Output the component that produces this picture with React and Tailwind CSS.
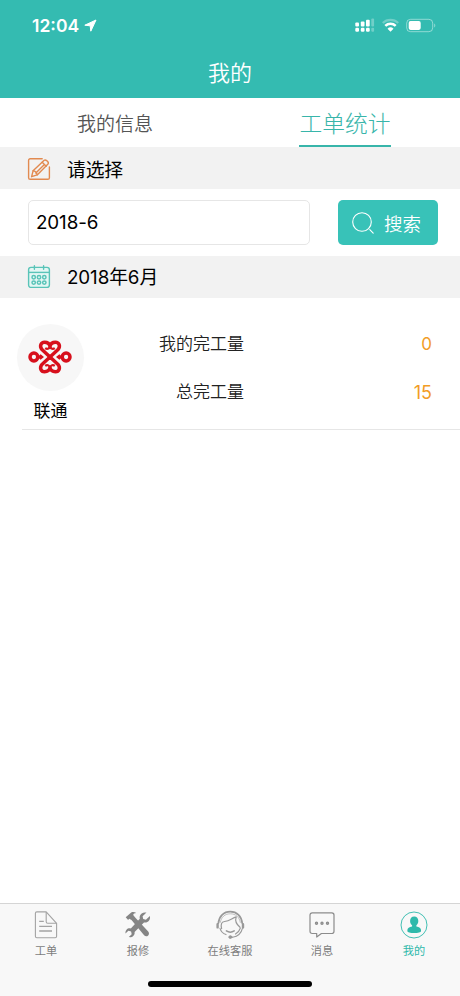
const StatusIcons = () => (
  <svg className="h-4 w-[82px]" viewBox="0 0 82 16" fill="#fff">
    {/* dual sim signal */}
    <g>
      <rect x="1.3" y="4.4" width="3.7" height="4.2" rx="1" />
      <rect x="6.8" y="3.4" width="3.7" height="5.2" rx="1" />
      <rect x="12" y="1.8" width="3.7" height="6.8" rx="1" />
      <rect x="17.3" y="0.6" width="2.8" height="8" rx="1" opacity="0.3" />
      <rect x="1.3" y="9.8" width="3.7" height="4" rx="1.2" />
      <rect x="6.8" y="9.8" width="3.7" height="4" rx="1.2" />
      <rect x="12" y="9.8" width="3.7" height="4" rx="1.2" />
      <rect x="17.3" y="9.8" width="2.8" height="4" rx="1" opacity="0.3" />
    </g>
    {/* wifi */}
    <g fill="none" stroke="#fff">
      <path d="M28.8 5a11 11 0 0 1 15.4 0" strokeWidth="2.2" opacity="0.3" />
      <path d="M31.3 7.8a7.4 7.4 0 0 1 10.4 0" strokeWidth="2.5" />
    </g>
    <path d="M33.5 10.7a4.4 4.4 0 0 1 6 0L36.5 13.8z" />
    {/* battery */}
    <rect x="52.7" y="1.3" width="26" height="12.4" rx="3.8" fill="none" stroke="#fff" opacity="0.45" />
    <rect x="54.7" y="3.1" width="12" height="8.8" rx="1.8" />
    <path d="M80.2 5.4c1.5.6 1.5 3.4 0 4z" opacity="0.45" />
  </svg>
);

const EditIcon = () => (
  <svg className="size-6" viewBox="0 0 24 24" fill="none" stroke="#e28a50" strokeWidth="1.4" strokeLinecap="round" strokeLinejoin="round">
    <path d="M15.2 1.7H3.2a1.6 1.6 0 0 0-1.6 1.6v17.4a1.6 1.6 0 0 0 1.6 1.6h17.6a1.6 1.6 0 0 0 1.6-1.6V10" />
    <path d="M4.6 19.7l1.5-5.9L17.2 3.3c1.4-1.3 5.2 2.2 3.8 3.8L10.2 17.9z" />
    <path d="M15.2 5.2l4 4M17.2 7.8l-8.4 8.1M6.1 13.8c1.7.2 3.6 1.9 4.1 4.1" />
  </svg>
);

const CalendarIcon = () => (
  <svg className="size-6" viewBox="0 0 24 24" fill="none" stroke="#59c4b8" strokeWidth="1.4">
    <rect x="1.6" y="2.4" width="20.8" height="20" rx="2.4" fill="#e4f7f4" />
    <path d="M1.6 7.4h20.8" />
    <path d="M7.4.8v3.4M16.6.8v3.4" strokeLinecap="round" />
    <g strokeWidth="1.5">
      <circle cx="6.7" cy="12.2" r="1.7" />
      <circle cx="12" cy="12.2" r="1.7" />
      <circle cx="17.3" cy="12.2" r="1.7" />
      <circle cx="6.7" cy="17.6" r="1.7" />
      <circle cx="12" cy="17.6" r="1.7" />
      <circle cx="17.3" cy="17.6" r="1.7" />
    </g>
  </svg>
);

const UnicomLogo = () => (
  <svg className="h-[34px] w-11" viewBox="0 0 44 34" fill="none" stroke="#d7101c" strokeWidth="3.5" strokeLinejoin="round">
    <circle cx="5.9" cy="17" r="3.9" />
    <circle cx="38.1" cy="17" r="3.9" />
    {/* top and bottom hearts, crossing in the middle */}
    <path d="M22 17L14.2 9.8C11 6.2 13 2.3 16.6 2.3c3 0 4.8 1.6 5.4 4 .6-2.4 2.4-4 5.4-4 3.6 0 5.6 3.9 2.4 7.5L22 17" />
    <path d="M22 17l-7.8 7.2c-3.2 3.6-1.2 7.5 2.4 7.5 3 0 4.8-1.6 5.4-4 .6 2.4 2.4 4 5.4 4 3.6 0 5.6-3.9 2.4-7.5L22 17" />
    <path d="M17.2 8.2c1.8 1.2 3.9.7 4.8-1.4.9 2.1 3 2.6 4.8 1.4M17.2 25.8c1.8-1.2 3.9-.7 4.8 1.4.9-2.1 3-2.6 4.8-1.4" strokeWidth="2.2" />
    {/* side knots */}
    <path d="M9.6 17l3-2.8 3.4 2.8-3.4 2.8zM34.4 17l-3-2.8-3.4 2.8 3.4 2.8z" fill="#d7101c" stroke="none" />
  </svg>
);

const OrderIcon = () => (
  <svg className="size-7" viewBox="0 0 28 28" fill="none" stroke="#a3a3a3" strokeWidth="1.1" strokeLinejoin="round">
    <path d="M14.2.9H4.8c-.9 0-1.4.5-1.4 1.4v23c0 .9.5 1.4 1.4 1.4h18.4c.9 0 1.4-.5 1.4-1.4v-13z" />
    <path d="M14.2.9v9.9c0 1 .5 1.5 1.5 1.5h8.9" />
    <path d="M7.2 10.4h4.6M7.2 15.3h12.8M7.2 20h12.8" strokeWidth="1.3" />
  </svg>
);

const RepairIcon = () => (
  <svg className="size-7" viewBox="0 0 28 28" fill="#858585">
    {/* wrench */}
    <path d="M25.9 5.1l-4 3.7-2.7-.8-.6-2.8 3.9-3.6c-3-.8-6 .8-6.7 3.5-.3 1-.2 1.8 0 2.6L6.8 17.4c-3-.7-5.6 1.4-5.3 5l2.9-2.6 2.7.8.6 2.7-2.9 2.8c3.3.6 6.3-1.6 5.8-5.2l9.4-9.4c3.6.7 6.7-2 5.9-6.4z" />
    {/* hammer */}
    <path d="M1.7 6.2L7.2 1.4c1.8-.8 3.6-.5 5 .7-1.8.1-2.7.6-3 1.8l2 2.7L24.2 20.5c1.4 1.6.8 3.3-.3 4.2-1.1.9-2.7.8-3.8-.5L7.5 9.1 5.2 7.7 4.1 9z" />
  </svg>
);

const ServiceIcon = () => (
  <svg className="h-[30px] w-[30px]" viewBox="0 0 30 30" fill="none" stroke="#999" strokeLinecap="round" strokeLinejoin="round">
    <path d="M3.4 13.2C4 6.3 8.7 1.6 15.3 1.6s11.3 4.7 11.9 11.6" strokeWidth="1.7" />
    <path d="M5.3 12.4C6.2 7 10 3.8 15.3 3.8s9.1 3.2 10 8.6" strokeWidth=".6" />
    <path d="M2.6 14.2v3.2M28 14.2v3.2" strokeWidth="2.4" />
    {/* hair */}
    <path d="M6.6 18.6c-1-4.2-.3-6.7 3-7.1 5.6-.6 7.5-3.7 11.6-4.6-1.6 4.6.4 7.6 3.8 10.4" strokeWidth="1.2" />
    <path d="M5 18.3c.9 3 3 5.2 6 6.3M25.3 18.3c-.9 2.6-2.5 4.6-4.8 5.8M27.4 18.4c-1 4.6-4.4 7.9-9.8 8.9" strokeWidth="1.1" />
    <path d="M11.4 20.9c2.4 1.6 5.4 1.6 7.8 0" strokeWidth="1.5" />
    <ellipse cx="15.4" cy="27.1" rx="1.6" ry="1.3" fill="#999" />
  </svg>
);

const MessageIcon = () => (
  <svg className="size-7" viewBox="0 0 28 28" fill="none" stroke="#8c8c8c" strokeWidth="1.2" strokeLinejoin="round">
    <path d="M4.2 1.9h19.6c1.4 0 2.2.8 2.2 2.2v16.2c0 1.4-.8 2.2-2.2 2.2H13.4L8.7 26v-3.5H4.2c-1.4 0-2.2-.8-2.2-2.2V4.1c0-1.4.8-2.2 2.2-2.2z" />
    <circle cx="8.5" cy="12.2" r="1.1" fill="#aaa" />
    <circle cx="14" cy="12.2" r="1.1" fill="#aaa" />
    <circle cx="19.5" cy="12.2" r="1.1" fill="#aaa" />
  </svg>
);

const MineIcon = () => (
  <svg className="size-7" viewBox="0 0 28 28" fill="#2fb9ab">
    <circle cx="14" cy="14" r="13" fill="none" stroke="#2fb9ab" strokeWidth=".9" />
    <path d="M14.2 5.5c2.7 0 4.1 1.9 4.1 4.4 0 2-.8 3.4-1.9 4.3v1.2c2.8.6 4.6 1.5 4.6 3.7v1.1c0 1-3 1.8-6.8 1.8s-6.8-.8-6.8-1.8v-1.1c0-2.2 1.9-3.1 4.7-3.7v-1.2c-1.2-.9-2-2.3-2-4.3 0-2.5 1.4-4.4 4.1-4.4z" />
  </svg>
);

const tabs = [
  { label: '工单', Icon: OrderIcon },
  { label: '报修', Icon: RepairIcon },
  { label: '在线客服', Icon: ServiceIcon },
  { label: '消息', Icon: MessageIcon },
  { label: '我的', Icon: MineIcon, active: true },
];

const SectionTitle = ({ icon, children }) => (
  <div className="flex h-[42px] shrink-0 items-center bg-[#f2f2f2] pl-[27px] text-[18.8px] text-black">
    {icon}
    <span className="ml-4 leading-none tracking-[-0.1px]">{children}</span>
  </div>
);

const App = () => {
  return (
    <div className="flex h-[996px] w-[460px] flex-col overflow-hidden bg-white font-['Inter','Noto_Sans_CJK_SC',sans-serif]">
      {/* Header */}
      <header className="h-[98px] shrink-0 bg-[#34bbb1] text-white">
        <div className="flex h-[50px] items-center justify-between pt-px pr-6 pl-8">
          <div className="flex items-center gap-[5px]">
            <span className="text-[17.5px] leading-none font-semibold">12:04</span>
            <svg className="size-[13px]" viewBox="0 0 13 13" fill="#fff" stroke="#fff" strokeLinejoin="round">
              <path d="M12 1L.8 6.2l5.4.6.6 5.4z" />
            </svg>
          </div>
          <StatusIcons />
        </div>
        <h1 className="flex h-[46px] items-center justify-center text-[22px] leading-none font-[350]">我的</h1>
      </header>

      {/* Top tabs */}
      <nav className="flex h-[49px] shrink-0">
        <div className="flex flex-1 items-center justify-center pt-[3px] text-[19px] leading-none text-[#555]">
          <span className="font-[350]">我的信息</span>
        </div>
        <div className="flex flex-1 justify-center">
          <span className="flex w-[92px] items-center justify-center border-b-2 border-[#38b5aa] pt-[6px] text-[22.8px] leading-none font-light whitespace-nowrap text-[#38b5aa]">
            工单统计
          </span>
        </div>
      </nav>

      <SectionTitle icon={<div className="pt-[2px]"><EditIcon /></div>}>
        <span className="inline-block pt-[6px]">请选择</span>
      </SectionTitle>

      {/* Search */}
      <div className="flex h-[67px] shrink-0 items-center justify-between pr-[22px] pl-7">
        <div className="flex h-[45px] w-[282px] items-center rounded-[5px] border border-[#e6e6e6] pt-[2px] pl-[7px] text-[18.8px] tracking-[-0.1px] text-black">
          2018-6
        </div>
        <button className="flex h-[45px] w-[100px] items-center rounded-[5px] bg-[#38c2b8] pl-[14px] text-[18.5px] leading-none text-white">
          <svg className="size-[22px]" viewBox="0 0 22 22" fill="none" stroke="#fff" strokeWidth="1.1" strokeLinecap="round">
            <circle cx="10" cy="10" r="9.3" />
            <path d="M17.8 17.6l3.4 3.6" />
          </svg>
          <span className="ml-[10px] pt-[3px] font-[350]">搜索</span>
        </button>
      </div>

      <SectionTitle icon={<CalendarIcon />}>
        <span className="inline-block pt-[2px]">2018年6月</span>
      </SectionTitle>

      {/* Carrier stats */}
      <section className="flex h-[132px] shrink-0 pt-[26px] pl-[17px]">
        <div className="flex w-[67px] flex-col items-center">
          <div className="flex size-[67px] items-center justify-center rounded-full bg-[#f7f7f7] pr-[2px] pb-[2px]">
            <UnicomLogo />
          </div>
          <span className="mt-3 text-[17px] leading-none text-black">联通</span>
        </div>
        <div className="flex flex-1 flex-col pt-px pr-7 text-[17px] text-[#222]">
          <div className="flex h-[39px] items-center justify-between">
            <span className="w-40 text-right leading-none font-[350]">我的完工量</span>
            <span className="text-[#f29d26]">0</span>
          </div>
          <div className="mt-[9px] flex h-[39px] items-center justify-between">
            <span className="w-40 text-right leading-none font-[350]">总完工量</span>
            <span className="text-[18px] text-[#f29d26]">15</span>
          </div>
        </div>
      </section>
      <div className="-mt-px ml-[22px] h-px shrink-0 bg-[#e6e6e6]" />

      {/* Bottom bar */}
      <footer className="mt-auto flex h-[93px] shrink-0 flex-col items-center border-t border-[#d5d5d5] bg-[#f8f8f8]">
        <div className="flex w-full pt-[6px]">
          {tabs.map(({ label, Icon, active }) => (
            <div key={label} className={`flex flex-1 flex-col items-center ${active ? 'text-[#2fb9ab]' : 'text-[#7d7d7d]'}`}>
              <div className="flex h-[30px] items-center">
                <Icon />
              </div>
              <span className="mt-[6px] text-[11.2px] leading-none">{label}</span>
            </div>
          ))}
        </div>
        <div className="mt-auto mb-[9px] h-[6px] w-[164px] rounded-full bg-black" />
      </footer>
    </div>
  );
};

export default App;
